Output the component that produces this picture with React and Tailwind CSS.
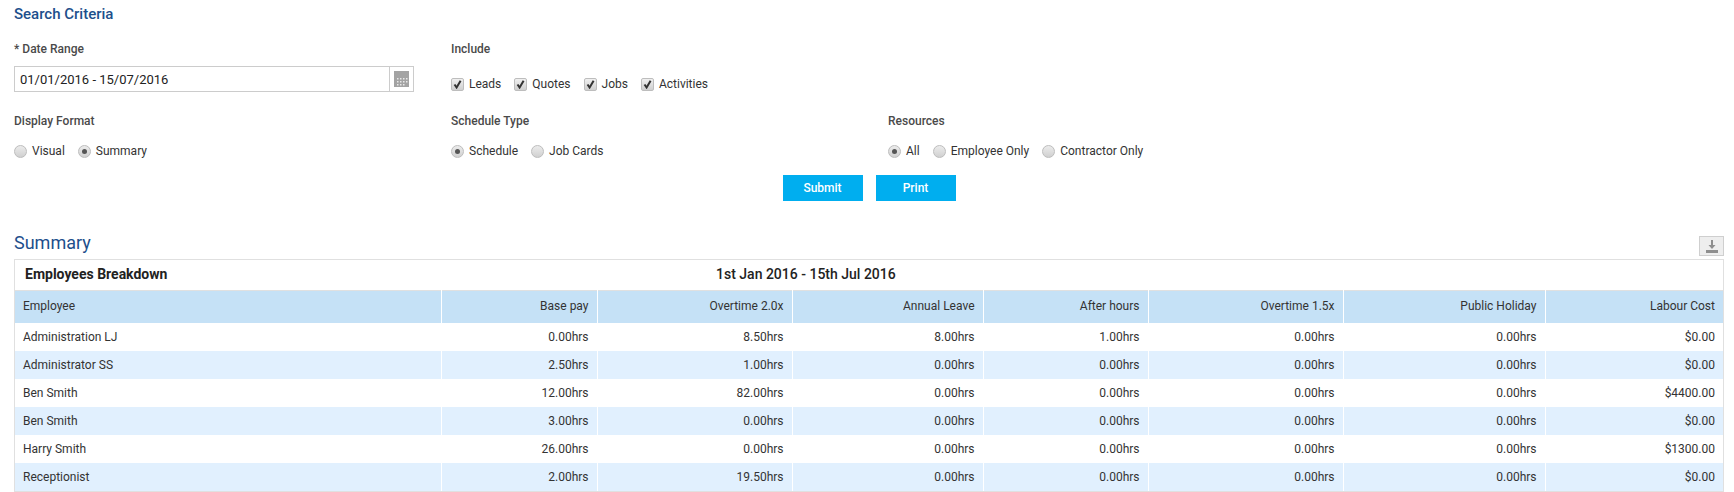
import React from 'react'

const cols = ['Employee', 'Base pay', 'Overtime 2.0x', 'Annual Leave', 'After hours', 'Overtime 1.5x', 'Public Holiday', 'Labour Cost']

const rows = [
  ['Administration LJ', '0.00hrs', '8.50hrs', '8.00hrs', '1.00hrs', '0.00hrs', '0.00hrs', '$0.00'],
  ['Administrator SS', '2.50hrs', '1.00hrs', '0.00hrs', '0.00hrs', '0.00hrs', '0.00hrs', '$0.00'],
  ['Ben Smith', '12.00hrs', '82.00hrs', '0.00hrs', '0.00hrs', '0.00hrs', '0.00hrs', '$4400.00'],
  ['Ben Smith', '3.00hrs', '0.00hrs', '0.00hrs', '0.00hrs', '0.00hrs', '0.00hrs', '$0.00'],
  ['Harry Smith', '26.00hrs', '0.00hrs', '0.00hrs', '0.00hrs', '0.00hrs', '0.00hrs', '$1300.00'],
  ['Receptionist', '2.00hrs', '19.50hrs', '0.00hrs', '0.00hrs', '0.00hrs', '0.00hrs', '$0.00'],
]

const Label = ({ children }) => (
  <div className="text-[12px] leading-[16px] font-medium text-[#4a4a4a]">{children}</div>
)

const Check = ({ label }) => (
  <label className="flex items-center gap-[5px]">
    <span className="flex h-[13px] w-[13px] items-center justify-center rounded-[2px] border border-[#bdbdbd] bg-gradient-to-b from-[#f0f0f0] to-[#cfcfcf]">
      <svg width="9" height="9" viewBox="0 0 9 9">
        <path d="M1.5 4.5 L3.6 7.5 L7.6 0.8" fill="none" stroke="#333" strokeWidth="2" />
      </svg>
    </span>
    <span>{label}</span>
  </label>
)

const Radio = ({ label, on }) => (
  <label className="flex items-center gap-[5px]">
    <span className="flex h-[13px] w-[13px] items-center justify-center rounded-full border border-[#bdbdbd] bg-gradient-to-b from-[#ececec] to-[#d0d0d0]">
      {on && <span className="h-[5px] w-[5px] rounded-full bg-[#555]" />}
    </span>
    <span>{label}</span>
  </label>
)

export default function App() {
  return (
    <div className="bg-white pl-[14px] pr-[10px] text-[12px] text-[#333] h-[492px] overflow-hidden font-['Roboto',sans-serif]">
      <h2 className="pt-[6px] text-[15px] leading-[16px] font-medium text-[#1d4f8c]">Search Criteria</h2>

      <div className="mt-[19px] grid grid-cols-[437px_437px_1fr]">
        <div>
          <Label>* Date Range</Label>
          <div className="mt-[9px] flex h-[26px] w-[400px] border border-[#ccc]">
            <div className="flex-1 pl-[5px] text-[13px] leading-[26px] text-[#222]">01/01/2016 - 15/07/2016</div>
            <div className="flex w-[24px] items-center justify-center border-l border-[#ccc]">
              <svg width="15" height="16" viewBox="0 0 15 16">
                <rect width="15" height="16" fill="#a3a3a3" />
                <path d="M3 7h1.5v1.5H3zM6 7h1.5v1.5H6zM9 7h1.5v1.5H9zM12 7h1.5v1.5H12zM3 10h1.5v1.5H3zM6 10h1.5v1.5H6zM9 10h1.5v1.5H9zM12 10h1.5v1.5H12zM3 13h1.5v1.5H3zM6 13h1.5v1.5H6zM9 13h1.5v1.5H9z" fill="#e8e8e8" />
              </svg>
            </div>
          </div>
        </div>
        <div className="col-span-2">
          <Label>Include</Label>
          <div className="mt-[18px] flex gap-[13px]">
            <Check label="Leads" />
            <Check label="Quotes" />
            <Check label="Jobs" />
            <Check label="Activities" />
          </div>
        </div>
      </div>

      <div className="mt-[20px] grid grid-cols-[437px_437px_1fr]">
        <div>
          <Label>Display Format</Label>
          <div className="mt-[13px] flex gap-[13px]">
            <Radio label="Visual" />
            <Radio label="Summary" on />
          </div>
        </div>
        <div>
          <Label>Schedule Type</Label>
          <div className="mt-[13px] flex gap-[13px]">
            <Radio label="Schedule" on />
            <Radio label="Job Cards" />
          </div>
        </div>
        <div>
          <Label>Resources</Label>
          <div className="mt-[13px] flex gap-[13px]">
            <Radio label="All" on />
            <Radio label="Employee Only" />
            <Radio label="Contractor Only" />
          </div>
        </div>
      </div>

      <div className="mt-[15px] flex justify-center gap-[13px]">
        <button className="h-[26px] w-[80px] bg-[#00aeef] text-[12px] font-medium text-white">Submit</button>
        <button className="h-[26px] w-[80px] bg-[#00aeef] text-[12px] font-medium text-white">Print</button>
      </div>

      <div className="mt-[32px] flex items-end justify-between">
        <h2 className="mb-[6px] text-[18px] leading-[20px] text-[#1d4f8c]">Summary</h2>
        <button className="mb-[3px] flex h-[20px] w-[25px] items-center justify-center border border-[#cfcfcf] bg-[#eeeeee]">
          <svg width="14" height="13" viewBox="0 0 14 13">
            <path d="M6 0h2v5h2.5L7 9 3.5 5H6zM1 10h12v3H1z" fill="#8f8f8f" />
          </svg>
        </button>
      </div>

      <div className="border border-[#e0e0e0]">
        <div className="flex h-[30px] items-center pb-[1px]">
          <div className="w-[701px] pl-[10px] text-[14px] font-bold text-[#222]">Employees Breakdown</div>
          <div className="text-[14px] font-medium text-[#222]">1st Jan 2016 - 15th Jul 2016</div>
        </div>
        <table className="w-full table-fixed border-collapse border-t border-[#e0e0e0] text-[12px]">
          <colgroup>
            <col className="w-[426px]" />
            <col className="w-[156px]" />
            <col className="w-[195px]" />
            <col className="w-[191px]" />
            <col className="w-[165px]" />
            <col className="w-[195px]" />
            <col className="w-[202px]" />
            <col />
          </colgroup>
          <thead>
            <tr className="h-[32px] bg-[#c5e1f6]">
              {cols.map((c, i) => (
                <th key={c} className={`border-r border-white px-[8px] pb-[1px] font-normal text-[#333] last:border-r-0 ${i === 0 ? 'text-left' : 'text-right'}`}>
                  {c}
                </th>
              ))}
            </tr>
          </thead>
          <tbody>
            {rows.map((r, i) => (
              <tr key={i} className={`h-[28px] ${i % 2 ? 'bg-[#e1f0fe]' : 'bg-white'}`}>
                {r.map((v, j) => (
                  <td key={j} className={`border-r border-white px-[8px] text-[#333] last:border-r-0 ${j === 0 ? 'text-left' : 'text-right'}`}>
                    {v}
                  </td>
                ))}
              </tr>
            ))}
          </tbody>
        </table>
      </div>
    </div>
  )
}
